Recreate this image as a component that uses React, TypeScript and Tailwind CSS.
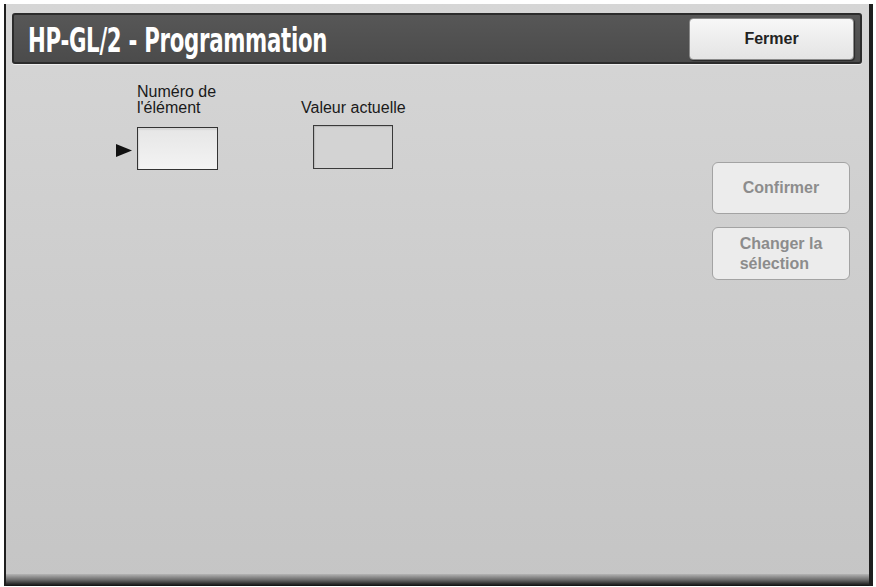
const ARIAL = "font-['Liberation_Sans',Arial,sans-serif]"

function SideButton({ children }: { children: React.ReactNode }) {
  return (
    <button
      disabled
      className={`w-[138px] flex items-center justify-center rounded-[6px] border border-[#a3a3a3] bg-[#ececec] text-[16px] font-bold leading-[20px] text-[#8c8c8c] ${ARIAL}`}
    >
      <span className="inline-block text-left">{children}</span>
    </button>
  )
}

export default function App() {
  return (
    <div className="w-[876px] h-[587px] bg-white pt-[4px] pl-[4px] pr-[3px] pb-[1px]">
      <div className="h-full flex flex-col border-l-2 border-r-4 border-[#1e1e1e] bg-gradient-to-b from-[#d6d6d6] via-[#cdcdcd] to-[#c5c5c5]">
        {/* Title bar */}
        <div className="mt-[9px] ml-[6px] mr-[7px] h-[51px] flex items-center justify-between rounded-[3px] border-2 border-[#2c2c2c] bg-gradient-to-b from-[#575757] to-[#4b4b4b] pl-[14px] pr-[6px] shadow-[0_1px_0_#eeeeee]">
          <h1 className="mt-[3px] origin-left scale-x-[0.695] whitespace-nowrap font-['DejaVu_Sans_Condensed','DejaVu_Sans',sans-serif] text-[34px] font-bold leading-none tracking-[-0.4px] text-white">
            HP-GL/2 - Programmation
          </h1>
          <button
            className={`w-[165px] h-[42px] rounded-[4px] border border-[#8a8a8a] bg-gradient-to-b from-[#f7f7f7] to-[#e4e4e4] text-[16px] font-bold text-[#222] shadow-[1px_1px_1px_#2a2a2a] ${ARIAL}`}
          >
            Fermer
          </button>
        </div>

        {/* Body */}
        <div className="flex-1 flex">
          <div className="flex pl-[110px] pt-[20px]">
            <div className="flex flex-col">
              <div className={`ml-[21px] h-[32px] text-[16px] leading-[16px] text-[#1a1a1a] ${ARIAL}`}>
                Numéro de
                <br />
                l'élément
              </div>
              <div className="mt-[11px] flex items-center gap-[5px]">
                <svg width="16" height="13" viewBox="0 0 16 13" className="mt-[3px]">
                  <polygon points="0,0 16,6.5 0,13" fill="#111" />
                </svg>
                <div className="w-[81px] h-[43px] border border-[#333] bg-gradient-to-b from-[#e6e6e6] to-[#f3f3f3] shadow-[inset_1px_2px_1px_#d8d8d8]" />
              </div>
            </div>

            <div className="ml-[83px] flex flex-col items-center">
              <div className={`h-[32px] flex items-end text-[16px] leading-[16px] text-[#1a1a1a] ${ARIAL}`}>
                Valeur actuelle
              </div>
              <div className="mt-[9px] w-[80px] h-[44px] border border-[#3a3a3a] bg-[#d3d3d3] shadow-[inset_1px_1px_1px_#b8b8b8]" />
            </div>
          </div>

          <div className="ml-auto mr-[19px] mt-[98px] flex flex-col gap-[13px]">
            <div className="flex h-[52px]">
              <SideButton>Confirmer</SideButton>
            </div>
            <div className="flex h-[53px]">
              <SideButton>
                Changer la
                <br />
                sélection
              </SideButton>
            </div>
          </div>
        </div>

        {/* Bottom shading */}
        <div className="h-[12px] bg-gradient-to-b from-[#b5b5b5] via-[#6a6a6a] to-[#111]" />
      </div>
    </div>
  )
}
